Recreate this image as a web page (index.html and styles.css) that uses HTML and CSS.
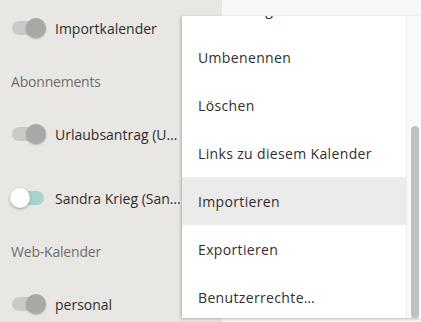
FILE: index.html
```html
<!DOCTYPE html>
<html lang="de">
<head>
<meta charset="utf-8">
<title>Kalender</title>
<link rel="stylesheet" href="styles.css">
</head>
<body>
<div class="app">
  <aside class="sidebar">
    <div class="row">
      <span class="toggle toggle--disabled"><span class="track"></span><span class="knob knob--right"></span></span>
      <span class="label">Importkalender</span>
    </div>
    <div class="section">Abonnements</div>
    <div class="row">
      <span class="toggle toggle--disabled"><span class="track"></span><span class="knob knob--right"></span></span>
      <span class="label">Urlaubsantrag (Urlaubsantrag)</span>
    </div>
    <div class="row row--spaced">
      <span class="toggle toggle--off"><span class="track"></span><span class="knob knob--left"></span></span>
      <span class="label">Sandra Krieg (Sandra Krieg)</span>
    </div>
    <div class="section">Web-Kalender</div>
    <div class="row">
      <span class="toggle toggle--disabled"><span class="track"></span><span class="knob knob--right"></span></span>
      <span class="label">personal</span>
    </div>
  </aside>
  <main class="main"></main>
</div>
<div class="menu">
  <ul class="menu-list">
    <li class="menu-item">Einstellungen</li>
    <li class="menu-item">Umbenennen</li>
    <li class="menu-item">Löschen</li>
    <li class="menu-item">Links zu diesem Kalender</li>
    <li class="menu-item menu-item--hover">Importieren</li>
    <li class="menu-item">Exportieren</li>
    <li class="menu-item">Benutzerrechte…</li>
  </ul>
  <div class="scrollbar"><div class="thumb"></div></div>
</div>
</body>
</html>
```
FILE: styles.css
```css
html, body {
  margin: 0;
  padding: 0;
}
body {
  width: 421px;
  height: 322px;
  overflow: hidden;
  position: relative;
  font-family: "Open Sans", "Noto Sans", "Liberation Sans", sans-serif;
  font-size: 14px;
  color: #333;
}
.app {
  display: flex;
  height: 322px;
}
.sidebar {
  width: 222px;
  flex: none;
  background: #e8e7e3;
  padding-top: 4px;
  box-sizing: border-box;
}
.main {
  flex: 1;
  background: #f8f8f8;
}
.row {
  height: 48px;
  display: flex;
  align-items: center;
  padding-left: 10px;
  gap: 9px;
}
.row--spaced {
  margin-top: 16px;
}
.section {
  height: 58px;
  display: flex;
  align-items: center;
  padding-left: 11px;
  color: #6e6e6e;
  letter-spacing: -0.2px;
}
.label {
  width: 127px;
  white-space: nowrap;
  overflow: hidden;
  text-overflow: ellipsis;
  color: #2f2f2f;
}
.toggle {
  position: relative;
  width: 36px;
  height: 22px;
  flex: none;
}
.track {
  position: absolute;
  left: 2px;
  top: 4px;
  width: 32px;
  height: 14px;
  border-radius: 7px;
  background: #c9c9c6;
}
.knob {
  position: absolute;
  top: 1px;
  width: 20px;
  height: 20px;
  border-radius: 50%;
  background: #a8a8a8;
  box-shadow: 0 1px 2px rgba(0,0,0,0.25);
}
.knob--right { left: 16px; }
.knob--left { left: 0; background: #fff; box-shadow: 0 1px 3px rgba(0,0,0,0.35); }
.toggle--off .track { background: #a9d4ce; }

.menu {
  position: absolute;
  left: 182px;
  top: 16px;
  width: 239px;
  height: 302px;
  display: flex;
  background: #fff;
  overflow: hidden;
  box-shadow: -1px 1px 3px rgba(0,0,0,0.25);
}
.menu-list {
  list-style: none;
  margin: -31px 0 0;
  padding: 0;
  flex: 1;
}
.menu-item {
  height: 48px;
  display: flex;
  align-items: center;
  padding-left: 16px;
  color: #2f2f2f;
  white-space: nowrap;
  letter-spacing: 0.35px;
}
.menu-item--hover {
  background: #ebebeb;
}
.scrollbar {
  width: 14px;
  flex: none;
  background: #f9f9f9;
  border-left: 1px solid #ececec;
  display: flex;
  flex-direction: column;
  justify-content: flex-end;
  align-items: center;
}
.thumb {
  width: 8px;
  height: 192px;
  border-radius: 4px 4px 3px 3px;
  background: #c1c1c1;
  margin-left: 1px;
}
```
